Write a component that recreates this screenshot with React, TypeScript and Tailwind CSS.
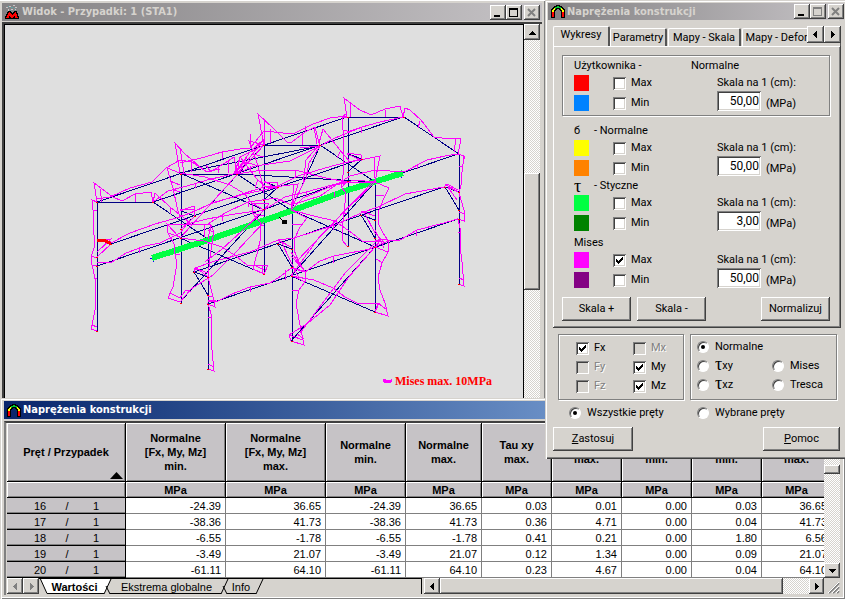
import type { ReactNode } from 'react';
import clsx from 'clsx';

const RAISED = 'bg-[#d6d3ce] shadow-[inset_-1px_-1px_0_#404040,inset_1px_1px_0_#fff,inset_-2px_-2px_0_#808080]';
const SUNKEN = 'shadow-[inset_1px_1px_0_#808080,inset_-1px_-1px_0_#fff,inset_2px_2px_0_#404040,inset_-2px_-2px_0_#d6d3ce]';
const ETCHED = 'border border-[#808080] shadow-[inset_1px_1px_0_#fff,1px_1px_0_#fff]';
const TRACK = 'bg-[repeating-conic-gradient(#fff_0_25%,#d6d3ce_0_50%)] bg-[length:2px_2px]';
const UI_FONT = "font-['Roboto',sans-serif] text-[11px] leading-4";
const TITLE_FONT = "font-['DejaVu_Sans_Condensed','DejaVu_Sans',sans-serif] text-[11px] font-bold";

type Point = [number, number];

// every frame of the hall is the first one shifted by this vector
const STEP: Point = [83.5, -28.3];
const FRAMES = [0, 1, 2, 3];

const frameBars = [
  'M97 331V202H153L208 239V369',
  'M97 239L111 244L97 257',
  'M208 277L194 272L208 295',
];

const longBars = [
  'M97 202L347 117',
  'M153 202L403 117',
  'M208 239L458 154',
  'M111 244L361 159',
  'M97 266L347 181',
  'M194 272L444 187',
  'M208 304L458 219',
];

const braces = [
  'M180 173L320 146L291 210',
  'M264 145L237 174L375 182',
  'M180 173L264 210L180 302',
  'M264 145L180 238L264 274',
  'M291 210L375 247L291 341',
  'M375 182L291 276L375 312',
];

const nodes: Point[] = [
  [97, 202], [153, 202], [97, 257], [97, 266], [97, 331], [111, 244],
  [208, 277], [194, 272], [208, 295], [208, 304], [208, 369],
];

const stress = [
  // left columns
  'M97 202L92 200L93 210L94 235L94 248L91 257L92 265L97 266M93 210H97M91 256L97 258M92 265L95 278L96 290L95 310L92 325L91 329L97 331M94 278H97M92 325L97 327',
  'M180 173L167 168L173 188L177 207L180 218M170 181L180 185M180 238L167 224L168 233L174 244L175 254L177 263L173 287L168 298L180 302M168 233L180 237M176 254H180M170 293L180 298M167 224H208M174 190L180 192',
  'M264 145L249 141L257 163L262 182L264 193M253 154L264 157M264 210L252 203L252 213L260 222L261 237L258 250L254 265L253 269L264 274M252 213L264 216M261 225H264M254 265L264 270M252 203L269 204L264 210',
  'M347 117L342 117L343 130L344 157L343 175L341 187L346 193L344 213L342 230L342 240L347 246M343 130H347M342 187L347 181M344 213H347M343 242L347 246M342 117L347 113',
  // frame girders
  'M97 202L94 183L113 197L122 201L135 194L151 192L153 202L155 193L170 207L184 218L191 224L211 224L208 239M100 189L102 202M135 194L136 202M171 207L170 214M205 224L204 237',
  'M180 173L175 143L185 154L205 171L212 171L228 161L234 157L237 173L240 157L257 179L267 188L298 184L291 210M180 148L184 173M191 160V172M218 166V173M228 160V173M258 179L255 188M294 185L291 210',
  'M264 145L258 114L274 129L288 143L292 142L305 132L315 127L319 143L323 129L340 150L350 162L380 156L375 182M264 120L265 145M270 129V143M302 134V145M314 127L317 144M341 150L337 158M375 158L374 178',
  'M347 117L344 98L360 110L371 115L385 109L400 106L403 117L405 108L410 110L421 120L434 137L442 138L461 139L458 154M350 103L351 117M385 110L386 117M420 121L418 128M456 139L454 152',
  // right columns
  'M208 239L211 225L214 232L212 243L210 257L208 277M214 232L208 230M212 243H208M208 277L213 297L215 307L208 304L212 317L211 333L212 350L214 371L208 369M208 296L213 297M208 300H216M211 317H208M208 364L214 367',
  'M291 210L307 218L300 227L294 240L294 250L298 260L305 272L305 282L299 290L296 303L299 320L304 345L291 341M292 224H301M305 282L291 275M299 290H292M297 334L304 339M291 252L301 266M291 256L305 271L291 268M291 262L299 278',
  'M375 182L389 188L384 198L379 210L378 223L383 233L389 242L388 252L382 263L378 277L380 290L385 303L388 316L375 312M376 195H384M375 247L388 252M376 259L383 263M378 303L386 309M375 233L384 242L375 240M375 230L384 248M375 312L378 303L371 303',
  'M458 154L464 156L462 172L461 185L459 193L464 210L464 221L458 219L461 232L460 245L462 262L464 286L458 284M459 166H463M459 212L465 214M461 232H458M459 278L464 280M464 156V159',
  // left eaves, ridge, right eaves
  'M97 199L110 197L130 188L152 182L166 168L180 160L192 162L207 172M180 163L205 157L222 152L240 149L250 148L264 131L293 134L313 124L330 118L347 116M222 152V159M250 134V148M305 132V126',
  'M153 202L168 191L187 186L207 180L237 173M195 183V188M237 173L255 166L290 161L320 146M250 166V171M320 146L335 138L362 127L380 122L403 117M361 127V133M347 132L362 127M206 165L210 171L220 169',
  'M208 224L225 213L248 202L276 198L291 205L320 196L336 185L350 176L375 170L404 172L427 160L445 156L458 154M248 202V207M334 192V197M417 164V169M291 210L303 198L332 186L355 180L375 182',
  // crane rails
  'M97 239H109L111 244L97 257M97 241L111 239L97 252L106 243M111 243L130 233L155 224L180 217L195 211L215 202L245 194L278 187M195 211L210 204L236 196L264 187L278 186L298 176L332 166L361 159L365 159M180 209L195 210M180 211L194 206L195 216L180 230M264 182L278 183L277 189L264 181M347 153L361 155V160L347 154',
  'M97 262H112L126 253L145 246L160 243L180 233L187 224L207 219L235 214L264 210L285 197L306 192L347 181M139 248V253M222 215V221M306 192V197',
  'M194 269L198 269L208 277M195 268L208 273M194 272L195 268L215 261L250 252L278 240L294 238L335 225L361 213L378 207L405 194L444 187M361 211L375 216M361 213L364 212L375 233M444 187L447 184L458 190M445 184L458 192L448 187L457 200M278 240L291 247M278 243L281 241L291 262',
  'M208 301H218L232 294L250 287L270 283L281 276L291 268L305 272L320 261L334 256L370 249L388 241L400 240L417 230L440 224L458 219M250 287V292M285 270V280M333 256V263M416 230V236M388 239H378',
  // braces
  'M180 173L205 177L230 185L245 194L253 205M180 238L191 226L215 199L234 178L264 145M264 210L242 231L222 249L205 262M180 302L191 289L213 275L235 253L264 222M180 298L186 290L191 292',
  'M180 238L204 241L222 247L236 256L247 265L268 265L264 274M262 265V274M237 174L262 170L295 170L326 178L347 182L375 182M295 171V177M264 145L240 157L234 174L250 152L264 139L237 174M240 167L247 158',
  'M291 210L314 216L335 221L352 233L362 241L380 241L375 247M334 221L333 230M375 182L345 211L320 236L291 276M375 180L346 209L332 225L315 242L296 262',
  'M291 276L314 280L333 288L345 297L357 303H379L375 312M375 247L348 278L330 305L308 323L289 335L291 341M375 243L346 272L331 292L300 333M289 335L303 340M320 146L309 163L306 178L291 209M319 145L306 160L303 184M320 140L319 146L300 148M237 165L234 174L245 162L255 165',
];

function StressView() {
  return (
    <svg
      width="518"
      height="373"
      viewBox="5 25 518 373"
      fill="none"
      shapeRendering="crispEdges"
      role="img"
      aria-label="Widok konstrukcji"
      className="block shrink-0"
    >
      <g stroke="#000084">
        {FRAMES.map(i => (
          <g key={i} transform={`translate(${Math.round(STEP[0] * i)} ${Math.round(STEP[1] * i)})`}>
            {frameBars.map(d => <path key={d} d={d} />)}
          </g>
        ))}
        {[...longBars, ...braces].map(d => <path key={d} d={d} />)}
      </g>
      <path d="M150 258H156M153 255V262M401 172V178" stroke="#0000ff" />
      <path d="M152 258L208 240L291 211L345 191L403 173" stroke="#00ff42" strokeWidth="6" />
      <g stroke="#ff00ff">
        {stress.map(d => <path key={d} d={d} />)}
      </g>
      <path d="M97 240L104 240L111 244" stroke="#ff0000" strokeWidth="3" />
      <g fill="#ff0000">
        {FRAMES.map(i =>
          nodes.map(([x, y], n) => (
            <rect key={`${i}-${n}`} x={Math.round(x + STEP[0] * i) - 1} y={Math.round(y + STEP[1] * i)} width="2" height="1" />
          )),
        )}
      </g>
      <path d="M279 217L283 221" stroke="#000" />
      <rect x="282" y="220" width="5" height="4" fill="#000" />
      <path d="M383 379H385L386 380H390L391 379H392V382L390 383H385L383 382Z" fill="#ff00ff" />
      <text
        x="395"
        y="385"
        fill="#ff0000"
        fontFamily="Liberation Serif, serif"
        fontSize="12"
        fontWeight="bold"
      >
        Mises max. 10MPa
      </text>
    </svg>
  );
}

function ArchIcon() {
  return (
    <svg width="14" height="13" viewBox="0 0 14 13" shapeRendering="crispEdges" aria-hidden="true">
      <path d="M0 13V4h1V3h1V2h1V1h2V0h4v1h2v1h1v1h1v1h1v9h-4V6H9V5H8V4H6v1H5v1H4v7z" fill="#000" />
      <path d="M1 7h2v5H1zM11 7h2v5h-2z" fill="#ff0000" />
      <path d="M1 5h1V4h1V3h1v2H3v2H1zM13 5h-1V4h-1V3h-1v2h1v2h2z" fill="#ffff00" />
      <path d="M4 2h2V1h2v1h2v2H9V3H5v1H4z" fill="#00c730" />
    </svg>
  );
}

function RobotIcon() {
  return (
    <svg width="14" height="14" viewBox="0 0 14 14" shapeRendering="crispEdges" aria-hidden="true">
      <path d="M1 2h2v1H1zM4 1h2v1H4zM8 0h2v1H8zM10 2h2v1h-2zM6 4h2v1H6zM3 4h1v2H3zM10 4h1v1h-1z" fill="#c6c3c6" />
      <path d="M3 1h1v1H3zM6 2h2v1H6zM9 3h1v1H9zM5 5h1v1H5z" fill="#5aa6a8" />
      <path d="M0 14V12L3 6H6L7 8L9 6H12L14 12V14Z" fill="#000" />
      <path d="M1 13L4 7H5L7 10L10 7H11L13 13H10V10L8 13H6L5 10L4 13Z" fill="#ff0000" />
    </svg>
  );
}

function Arrow({ dir, muted = false }: { dir: 'up' | 'down' | 'left' | 'right'; muted?: boolean }) {
  const shapes = {
    up: 'M3 2h1v1h1v1h1v1h1v1H0V5h1V4h1V3h1z',
    down: 'M0 2h7v1H6v1H5v1H4v1H3V5H2V4H1V3H0z',
    left: 'M5 0v7H4V6H3V5H2V4H1V3h1V2h1V1h1V0z',
    right: 'M2 0v7h1V6h1V5h1V4h1V3H5V2H4V1H3V0z',
  };
  return (
    <svg width="7" height="7" viewBox="0 0 7 7" shapeRendering="crispEdges" aria-hidden="true">
      <path d={shapes[dir]} fill={muted ? '#808080' : '#000'} />
    </svg>
  );
}

function ScrollButton({ dir, label, className, muted }: {
  dir: 'up' | 'down' | 'left' | 'right';
  label: string;
  className: string;
  muted?: boolean;
}) {
  return (
    <button type="button" aria-label={label} className={clsx(RAISED, 'flex shrink-0 items-center justify-center', className)}>
      <Arrow dir={dir} muted={muted} />
    </button>
  );
}

function WindowButtons({ maxDisabled = false }: { maxDisabled?: boolean }) {
  const button = clsx(RAISED, 'flex h-[15px] w-4 items-center justify-center');
  return (
    <div className="ml-auto flex shrink-0">
      <button type="button" aria-label="Minimalizuj" className={button}>
        <svg width="10" height="9" shapeRendering="crispEdges"><path d="M1 7h6v2H1z" /></svg>
      </button>
      <button type="button" aria-label="Maksymalizuj" className={button}>
        <svg width="10" height="9" fill="none" shapeRendering="crispEdges" stroke={maxDisabled ? '#808080' : '#000'}>
          <path d="M0.5 0.5h8v8h-8zM0 1.5h9" />
        </svg>
      </button>
      <button type="button" aria-label="Zamknij" className={clsx(button, 'ml-[2px]')}>
        <svg width="10" height="9" fill="none" stroke="#808080" strokeWidth="2">
          <path d="M1 1L8 8M8 1L1 8" />
        </svg>
      </button>
    </div>
  );
}

function CheckBox({ label, checked = false, disabled = false }: { label: string; checked?: boolean; disabled?: boolean }) {
  return (
    <label className="flex items-center">
      <span className="relative flex h-[13px] w-[13px]">
        <input
          type="checkbox"
          defaultChecked={checked}
          disabled={disabled}
          className={clsx('peer h-[13px] w-[13px] appearance-none', SUNKEN, disabled ? 'bg-[#d6d3ce]' : 'bg-white')}
        />
        <svg
          className="pointer-events-none absolute top-[3px] left-[3px] hidden peer-checked:block"
          width="7"
          height="7"
          shapeRendering="crispEdges"
        >
          <path d="M0 2h1v1h1v1h1V3h1V2h1V1h1V0h1v3H6v1H5v1H4v1H3v1H2V6H1V5H0z" />
        </svg>
      </span>
      <span className={clsx('ml-[5px]', disabled && 'text-[#808080] [text-shadow:1px_1px_0_#fff]')}>{label}</span>
    </label>
  );
}

function Radio({ name, children, checked = false }: { name: string; children: ReactNode; checked?: boolean }) {
  return (
    <label className="flex h-4 items-center">
      <span className="relative flex h-3 w-3">
        <input
          type="radio"
          name={name}
          defaultChecked={checked}
          className="peer h-3 w-3 appearance-none rounded-full border border-t-[#808080] border-r-white border-b-white border-l-[#808080] bg-white shadow-[inset_1px_1px_0_#404040]"
        />
        <span className="pointer-events-none absolute top-1 left-1 hidden h-1 w-1 rounded-full bg-black peer-checked:block" />
      </span>
      <span className="ml-[6px]">{children}</span>
    </label>
  );
}

function Tau({ axis }: { axis: string }) {
  return (
    <span className="flex items-center">
      <span className="pb-1 font-['Liberation_Serif',serif] text-[18px] leading-4">τ</span>
      <span>{axis}</span>
    </span>
  );
}

interface ScaleProps {
  id: string;
  title: ReactNode;
  colors: [string, string];
  value: string;
  maxChecked?: boolean;
}

function ScaleSection({ id, title, colors, value, maxChecked }: ScaleProps) {
  return (
    <div className="px-[11px]">
      <div className="flex h-[18px] items-center">{title}</div>
      <div className="flex">
        <div className="flex flex-col gap-1">
          <span className={clsx('h-4 w-[15px]', colors[0])} />
          <span className={clsx('h-4 w-[15px]', colors[1])} />
        </div>
        <div className="ml-6 flex flex-col gap-1">
          <CheckBox label="Max" checked={maxChecked} />
          <CheckBox label="Min" />
        </div>
        <div className="ml-auto w-[101px]">
          <label htmlFor={id} className="block">Skala na 1 (cm):</label>
          <div className="flex">
            <input
              id={id}
              defaultValue={value}
              className={clsx('h-5 w-11 bg-white pr-[2px] text-right text-[12px]', SUNKEN)}
            />
            <span className="ml-[5px] pt-[6px] leading-[14px]">(MPa)</span>
          </div>
        </div>
      </div>
    </div>
  );
}

function PushButton({ children, className }: { children: ReactNode; className: string }) {
  return (
    <button type="button" className={clsx(RAISED, className)}>{children}</button>
  );
}

function StressDialog() {
  const tab = 'shrink-0 rounded-t-[2px] border-t border-l border-white border-r-2 border-r-[#555] text-center';
  return (
    <section className={clsx('absolute top-0 right-0 w-[300px] bg-[#d6d3ce] pt-[3px] pr-px pb-2 pl-[3px] shadow-[inset_1px_1px_0_#d6d3ce,inset_2px_2px_0_#fff,inset_0_-1px_0_#404040,inset_0_-2px_0_#808080]', UI_FONT)}>
      <header className="flex h-[17px] items-center bg-linear-to-r from-[#848284] to-[#c6c3c6] pl-[3px]">
        <ArchIcon />
        <h2 className={clsx('ml-[2px] text-[#d6d3ce]', TITLE_FONT)}>Naprężenia konstrukcji</h2>
        <WindowButtons maxDisabled />
      </header>

      <div className="pt-[6px] pr-[3px] pl-[5px]">
        <div className="relative flex h-5 items-end overflow-hidden" role="tablist">
          <button type="button" role="tab" aria-selected="true" className={clsx(tab, 'h-5 w-[57px] pb-[3px]')}>Wykresy</button>
          <button type="button" role="tab" aria-selected="false" className={clsx(tab, 'h-[18px] w-[57px]')}>Parametry</button>
          <button type="button" role="tab" aria-selected="false" className={clsx(tab, 'ml-px h-[18px] w-[73px]')}>Mapy - Skala</button>
          <button type="button" role="tab" aria-selected="false" className={clsx(tab, 'ml-px h-[18px] w-[100px] whitespace-nowrap')}>Mapy - Deformacje</button>
          <div className="absolute top-0 right-0 flex">
            <ScrollButton dir="left" label="Poprzednia zakładka" className="h-[17px] w-[17px]" />
            <ScrollButton dir="right" label="Następna zakładka" className="h-[17px] w-[17px]" />
          </div>
        </div>

        <div className={clsx(RAISED, 'pt-[9px] pr-[11px] pb-[7px] pl-[9px]')}>
          <div className={clsx(ETCHED, 'pt-px pb-1')}>
            <ScaleSection
              id="scale-user"
              title={<><span className="w-[117px]">Użytkownika -</span><span>Normalne</span></>}
              colors={['bg-[#ff0000]', 'bg-[#0082ff]']}
              value="50,00"
            />
          </div>
          <div className="flex flex-col px-px pt-[6px]">
            <ScaleSection
              id="scale-normal"
              title={<><span className="w-5">б</span><span>- Normalne</span></>}
              colors={['bg-[#ffff00]', 'bg-[#ff8200]']}
              value="50,00"
            />
            <div className="mt-px">
              <ScaleSection
                id="scale-shear"
                title={<><span className="w-5 font-['Liberation_Serif',serif] text-[18px]">τ</span><span>- Styczne</span></>}
                colors={['bg-[#00ff42]', 'bg-[#008200]']}
                value="3,00"
              />
            </div>
            <div className="mt-[3px]">
              <ScaleSection
                id="scale-mises"
                title="Mises"
                colors={['bg-[#ff00ff]', 'bg-[#840084]']}
                value="50,00"
                maxChecked
              />
            </div>
          </div>
          <div className="mt-[9px] flex gap-[6px]">
            <PushButton className="h-6 w-[69px]">Skala +</PushButton>
            <PushButton className="h-6 w-[69px]">Skala -</PushButton>
            <PushButton className="ml-auto h-6 w-[69px]">Normalizuj</PushButton>
          </div>
        </div>

        <div className="mt-[6px] flex gap-[6px] pr-1 pl-[5px]">
          <fieldset className={clsx(ETCHED, 'grid h-[66px] w-[126px] grid-cols-[57px_1fr] content-center gap-y-[3px] pl-[17px]')}>
            <CheckBox label="Fx" checked />
            <CheckBox label="Mx" disabled />
            <CheckBox label="Fy" disabled />
            <CheckBox label="My" checked />
            <CheckBox label="Fz" disabled />
            <CheckBox label="Mz" checked />
          </fieldset>
          <fieldset className={clsx(ETCHED, 'grid h-[66px] flex-1 grid-cols-[75px_1fr] content-start gap-y-[3px] pt-[4px] pl-[6px]')}>
            <Radio name="kind" checked>Normalne</Radio>
            <span />
            <Radio name="kind"><Tau axis="xy" /></Radio>
            <Radio name="kind">Mises</Radio>
            <Radio name="kind"><Tau axis="xz" /></Radio>
            <Radio name="kind">Tresca</Radio>
          </fieldset>
        </div>

        <div className="mt-[5px] grid grid-cols-[128px_1fr] pl-4">
          <Radio name="bars" checked>Wszystkie pręty</Radio>
          <Radio name="bars">Wybrane pręty</Radio>
        </div>

        <div className="mt-[6px] flex justify-between pr-px">
          <PushButton className="h-6 w-20"><u>Z</u>astosuj</PushButton>
          <PushButton className="h-6 w-[77px]"><u>P</u>omoc</PushButton>
        </div>
      </div>
    </section>
  );
}

function ViewWindow() {
  return (
    <section className="mr-[300px] flex flex-1 flex-col bg-[#d6d3ce] pt-[3px] pr-[3px] pl-[2px] shadow-[inset_0_1px_0_#fff,inset_-1px_0_0_#808080]">
      <header className="flex h-[18px] items-center bg-linear-to-r from-[#848284] to-[#c6c3c6] pr-[2px] pl-[3px]">
        <RobotIcon />
        <h1 className={clsx('ml-[3px] text-[#d6d3ce]', TITLE_FONT)}>Widok - Przypadki: 1 (STA1)</h1>
        <WindowButtons />
      </header>
      <div className="mt-px flex flex-1 border-t-2 border-l-2 border-t-[#404040] border-l-[#404040] pr-[2px]">
        <div className="flex min-w-0 flex-1 overflow-hidden border-t border-r border-l border-black bg-[#dfdfdf]">
          <StressView />
        </div>
        <div className={clsx('flex w-4 flex-col', TRACK)}>
          <ScrollButton dir="up" label="W górę" className="h-4 w-4" />
          <div className={clsx(RAISED, 'mt-[133px] h-[117px]')} />
        </div>
      </div>
    </section>
  );
}

const columns = [
  { lines: ['Normalne', '[Fx, My, Mz]', 'min.'], width: 'w-[100px]' },
  { lines: ['Normalne', '[Fx, My, Mz]', 'max.'], width: 'w-[100px]' },
  { lines: ['Normalne', 'min.'], width: 'w-20' },
  { lines: ['Normalne', 'max.'], width: 'w-[76px]' },
  { lines: ['Tau xy', 'max.'], width: 'w-[70px]' },
  { lines: ['Tau xz', 'max.'], width: 'w-[70px]' },
  { lines: ['Tau xy', 'min.'], width: 'w-[70px]' },
  { lines: ['Tau xz', 'min.'], width: 'w-[70px]' },
  { lines: ['Mises', 'max.'], width: 'w-[70px]' },
];

const rows = [
  { bar: 16, values: ['-24.39', '36.65', '-24.39', '36.65', '0.03', '0.01', '0.00', '0.03', '36.65'] },
  { bar: 17, values: ['-38.36', '41.73', '-38.36', '41.73', '0.36', '4.71', '0.00', '0.04', '41.73'] },
  { bar: 18, values: ['-6.55', '-1.78', '-6.55', '-1.78', '0.41', '0.21', '0.00', '1.80', '6.56'] },
  { bar: 19, values: ['-3.49', '21.07', '-3.49', '21.07', '0.12', '1.34', '0.00', '0.09', '21.07'] },
  { bar: 20, values: ['-61.11', '64.10', '-61.11', '64.10', '0.23', '4.67', '0.00', '0.04', '64.10'] },
];

const HEAD_CELL = 'border-r border-b border-black bg-[#c6c3c6] p-0 font-bold shadow-[inset_1px_1px_0_#fff,inset_-1px_-1px_0_#808080]';

function ResultsTable() {
  return (
    <table className="w-[825px] shrink-0 table-fixed border-separate border-spacing-0 bg-white font-['Liberation_Sans',sans-serif] text-[11px] leading-[14px]">
      <thead>
        <tr className="h-[59px]">
          <th className={clsx(HEAD_CELL, 'relative w-[119px]')}>
            Pręt / Przypadek
            <svg className="absolute right-[2px] bottom-[2px]" width="13" height="7"><path d="M0 7L6.5 0L13 7Z" /></svg>
          </th>
          {columns.map((col, i) => (
            <th key={i} className={clsx(HEAD_CELL, col.width)}>
              {col.lines.map(line => <div key={line}>{line}</div>)}
            </th>
          ))}
        </tr>
        <tr className="h-4">
          <th className={HEAD_CELL} />
          {columns.map((_, i) => <th key={i} className={HEAD_CELL}>MPa</th>)}
        </tr>
      </thead>
      <tbody>
        {rows.map(row => (
          <tr key={row.bar} className="h-4">
            <th className="border-r border-b border-black bg-[#c6c3c6] p-0 font-normal shadow-[inset_0_-1px_0_#808080]">
              <div className="grid grid-cols-[26px_28px_30px] pl-[20px] text-center">
                <span>{row.bar}</span>
                <span>/</span>
                <span>1</span>
              </div>
            </th>
            {row.values.map((v, i) => (
              <td key={i} className="border-r border-b border-[#808080] p-0 pr-1 text-right">{v}</td>
            ))}
          </tr>
        ))}
      </tbody>
    </table>
  );
}

function SheetTabs() {
  return (
    <div className="relative flex h-4 w-[383px] border-t border-r border-black bg-[#d6d3ce] font-['Liberation_Sans',sans-serif] text-[11px] leading-4">
      <svg className="absolute inset-0" width="230" height="15" fill="none" aria-hidden="true">
        <path d="M1 -1L8 15H65L72 -1Z" fill="#fff" />
        <path d="M1 -1L8 14.5H65M71 14.5H182M188 14.5H217M65 15L72 0M182 15L189 0M217 15L224 0M67 7L71 15M184 7L188 15" stroke="#000" />
      </svg>
      <button type="button" className="relative w-[71px] text-center font-bold">Wartości</button>
      <button type="button" className="relative w-[113px] text-center">Ekstrema globalne</button>
      <button type="button" className="relative w-9 text-center">Info</button>
    </div>
  );
}

function ResultsWindow() {
  return (
    <section className="bg-[#d6d3ce] pt-[3px] pr-[5px] pb-1 pl-1 shadow-[inset_1px_1px_0_#d6d3ce,inset_2px_2px_0_#fff,inset_-1px_-1px_0_#808080,inset_-2px_-2px_0_#fff]">
      <header className="flex h-[18px] items-center bg-linear-to-r from-[#08246b] to-[#a5cbf7] pl-[3px]">
        <ArchIcon />
        <h2 className={clsx('ml-[2px] text-white', TITLE_FONT)}>Naprężenia konstrukcji</h2>
      </header>
      <div className="mt-[2px] border-t-2 border-l-2 border-t-[#404040] border-l-[#808080] pl-px">
        <div className="flex">
          <div className="flex min-w-0 flex-1 overflow-hidden">
            <ResultsTable />
          </div>
          <div className={clsx('flex w-4 flex-col', TRACK)}>
            <ScrollButton dir="up" label="W górę" className="h-[15px]" />
            <div className={clsx(RAISED, 'mt-[27px] h-[9px]')} />
            <ScrollButton dir="down" label="W dół" className="mt-auto h-[15px]" />
          </div>
        </div>
        <div className="flex h-[17px]">
          <ScrollButton dir="left" label="Poprzedni arkusz" muted className="h-4 w-4" />
          <ScrollButton dir="right" label="Następny arkusz" muted className="h-4 w-4" />
          <SheetTabs />
          <div className={clsx('ml-[2px] flex h-4 flex-1', TRACK)}>
            <ScrollButton dir="left" label="W lewo" className="w-4" />
            <div className={clsx(RAISED, 'flex-1')} />
            <ScrollButton dir="right" label="W prawo" className="ml-[26px] w-[15px]" />
          </div>
          <svg width="16" height="16" className="bg-[#d6d3ce]" aria-hidden="true">
            <path d="M5 15L15 5M9 15L15 9M13 15L15 13" stroke="#808080" strokeWidth="2" />
            <path d="M4 15L15 4M8 15L15 8M12 15L15 12" stroke="#fff" />
          </svg>
        </div>
      </div>
    </section>
  );
}

export default function App() {
  return (
    <main className="relative flex min-h-screen flex-col overflow-hidden bg-[#848284] text-black">
      <ViewWindow />
      <ResultsWindow />
      <StressDialog />
    </main>
  );
}
